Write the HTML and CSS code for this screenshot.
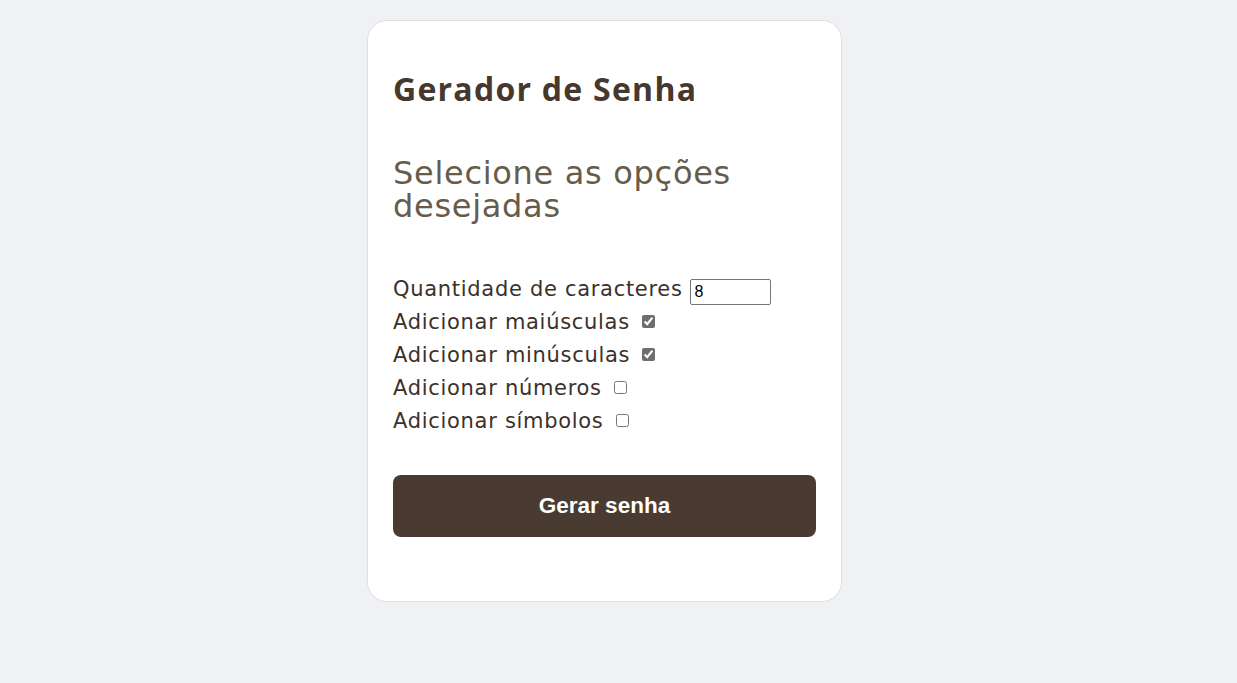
FILE: index.html
```html
<!DOCTYPE html>
<html lang="pt-BR">
<head>
<meta charset="utf-8">
<title>Gerador de Senha</title>
<link rel="stylesheet" href="styles.css">
</head>
<body>
<main class="card">
  <h1 class="title">Gerador de Senha</h1>
  <h2 class="subtitle">Selecione as opções desejadas</h2>
  <form class="options">
    <div class="row"><label for="qtd">Quantidade de caracteres</label> <input class="qty" type="text" id="qtd" value="8"></div>
    <div class="row"><label for="mai">Adicionar maiúsculas</label> <input type="checkbox" id="mai" checked></div>
    <div class="row"><label for="min">Adicionar minúsculas</label> <input type="checkbox" id="min" checked></div>
    <div class="row"><label for="num">Adicionar números</label> <input type="checkbox" id="num"></div>
    <div class="row"><label for="sim">Adicionar símbolos</label> <input type="checkbox" id="sim"></div>
    <button type="button" class="btn">Gerar senha</button>
  </form>
</main>
</body>
</html>
```

FILE: styles.css
```css
html, body {
  margin: 0;
  padding: 0;
}
body {
  background: #f0f1f5;
  font-family: "DejaVu Sans", "Open Sans", sans-serif;
  padding: 20px 28px 0 0;
}
.card {
  box-sizing: border-box;
  width: 475px;
  margin: 0 auto;
  background: #fff;
  border: 1px solid #dfe0e4;
  border-radius: 20px;
  padding: 48px 25px 64px;
}
.title {
  margin: 0;
  font-family: "Open Sans", sans-serif;
  font-size: 32px;
  line-height: 40px;
  font-weight: 700;
  letter-spacing: 1.25px;
  color: #46382e;
}
.subtitle {
  margin: 48px 0 0;
  font-size: 32px;
  line-height: 33px;
  font-weight: 400;
  letter-spacing: 0.7px;
  color: #665c4c;
}
.options {
  margin: 50px 0 0;
  display: flex;
  flex-direction: column;
}
.row {
  font-size: 21px;
  line-height: 33px;
  letter-spacing: 0.7px;
  color: #3b312a;
  display: flex;
  align-items: center;
  height: 33px;
}
.row label {
  margin-right: 6px;
}
.qty {
  box-sizing: border-box;
  width: 81px;
  height: 26px;
  margin: 5px 0 0 1px;
  font-family: "Liberation Sans", Arial, sans-serif;
  font-size: 16px;
  letter-spacing: 0;
  padding: 1px 4px;
  border: 1px solid #767676;
  border-radius: 2px;
  color: #000;
}
input[type="checkbox"] {
  width: 13px;
  height: 13px;
  margin: 0 0 2px 6px;
  accent-color: #6e6e6e;
}
.btn {
  margin-top: 37px;
  height: 62px;
  border: none;
  border-radius: 8px;
  background: #4a3b32;
  color: #fff;
  font-family: "Liberation Sans", Arial, sans-serif;
  font-size: 22.5px;
  font-weight: 700;
  cursor: pointer;
}
```
